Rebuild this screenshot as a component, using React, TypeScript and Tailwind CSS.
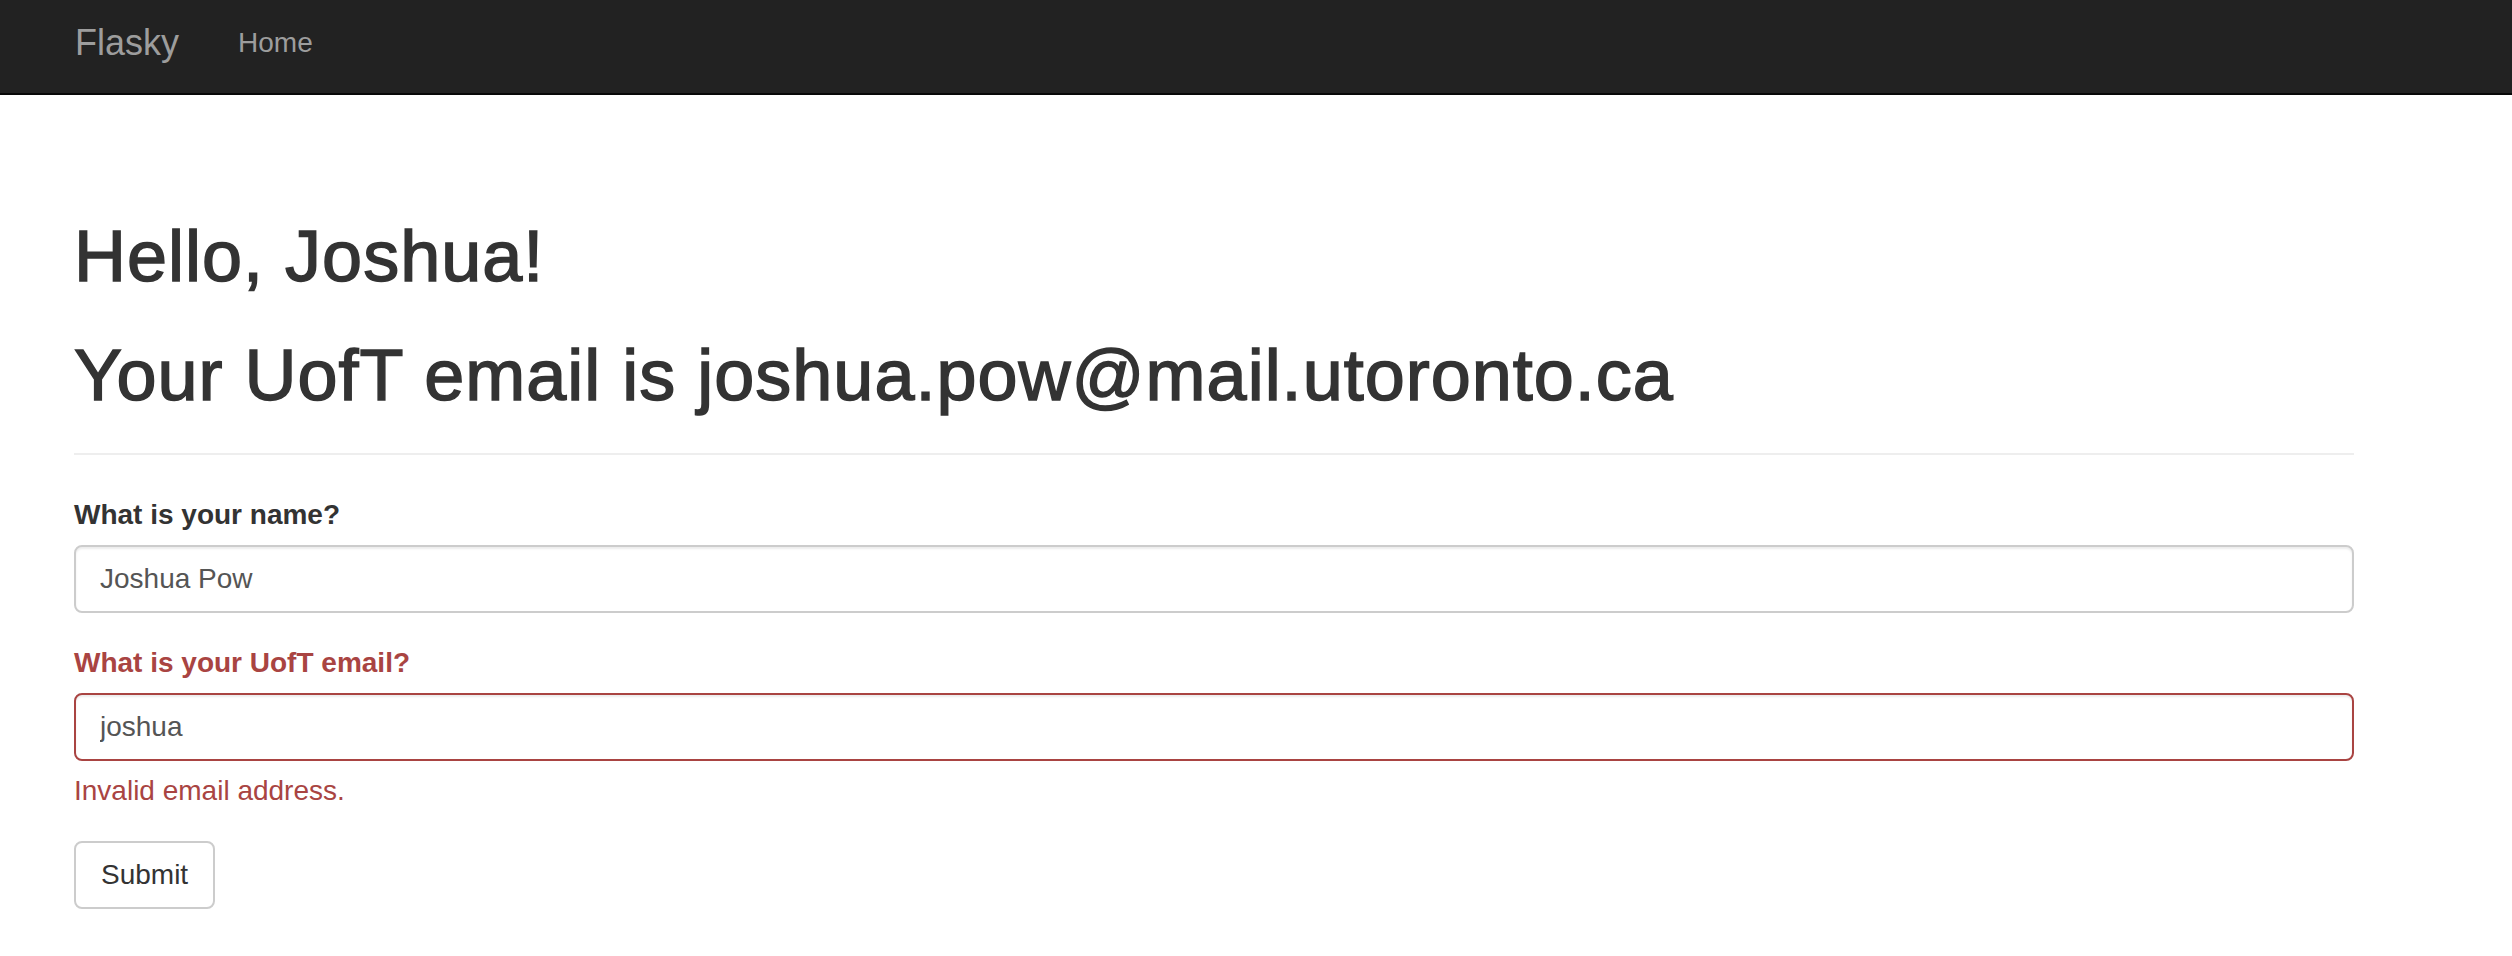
import React from 'react';

const font = "font-['Liberation_Sans','Helvetica_Neue',Helvetica,Arial,sans-serif]";

function Navbar() {
    return (
        <nav className="w-full h-[95px] bg-[#222222] border-b-2 border-[#080808]">
            <div className="pl-[75px] flex items-start pt-[23px]">
                <a className="text-[36px] leading-[40px] text-[#9d9d9d] pr-[30px]">Flasky</a>
                <a className="text-[28px] leading-[40px] text-[#9d9d9d] pl-[29px]">Home</a>
            </div>
        </nav>
    );
}

export default function App() {
    return (
        <div className={`${font} min-h-screen bg-white text-[#333333]`}>
            <Navbar />

            <div className="pl-[74px] w-[2354px]">
                {/* Page header */}
                <div className="pt-[122px] pb-[18px] border-b-2 border-[#eeeeee] mb-[40px]">
                    <h1 className="text-[72px] leading-[79px] font-medium tracking-[1px] [-webkit-text-stroke:1.5px_#333333]">
                        Hello, Joshua!
                    </h1>
                    <h1 className="text-[72px] leading-[79px] font-medium tracking-[1px] [-webkit-text-stroke:1.5px_#333333] mt-[40px] mb-[20px]">
                        Your UofT email is joshua.pow@mail.utoronto.ca
                    </h1>
                </div>

                {/* Form */}
                <form className="flex flex-col" onSubmit={(e) => e.preventDefault()}>
                    <div className="mb-[30px]">
                        <label className="block text-[28px] leading-[40px] font-bold mb-[10px]">What is your name?</label>
                        <input
                            className="w-full h-[68px] px-[24px] text-[28px] text-[#555555] border-2 border-[#cccccc] rounded-[8px] shadow-[inset_0_2px_2px_rgba(0,0,0,0.075)] outline-none"
                            defaultValue="Joshua Pow"
                        />
                    </div>

                    <div className="mb-[30px]">
                        <label className="block text-[28px] leading-[40px] font-bold mb-[10px] text-[#a94442]">What is your UofT email?</label>
                        <input
                            className="w-full h-[68px] px-[24px] text-[28px] text-[#555555] border-2 border-[#a94442] rounded-[8px] shadow-[inset_0_2px_2px_rgba(0,0,0,0.075)] outline-none"
                            defaultValue="joshua"
                        />
                        <p className="mt-[10px] text-[28px] leading-[40px] text-[#a94442]">Invalid email address.</p>
                    </div>

                    <div>
                        <button
                            type="submit"
                            className="h-[68px] px-[25px] text-[28px] leading-[40px] text-[#333333] bg-white border-2 border-[#cccccc] rounded-[8px]"
                        >
                            Submit
                        </button>
                    </div>
                </form>
            </div>
        </div>
    );
}
